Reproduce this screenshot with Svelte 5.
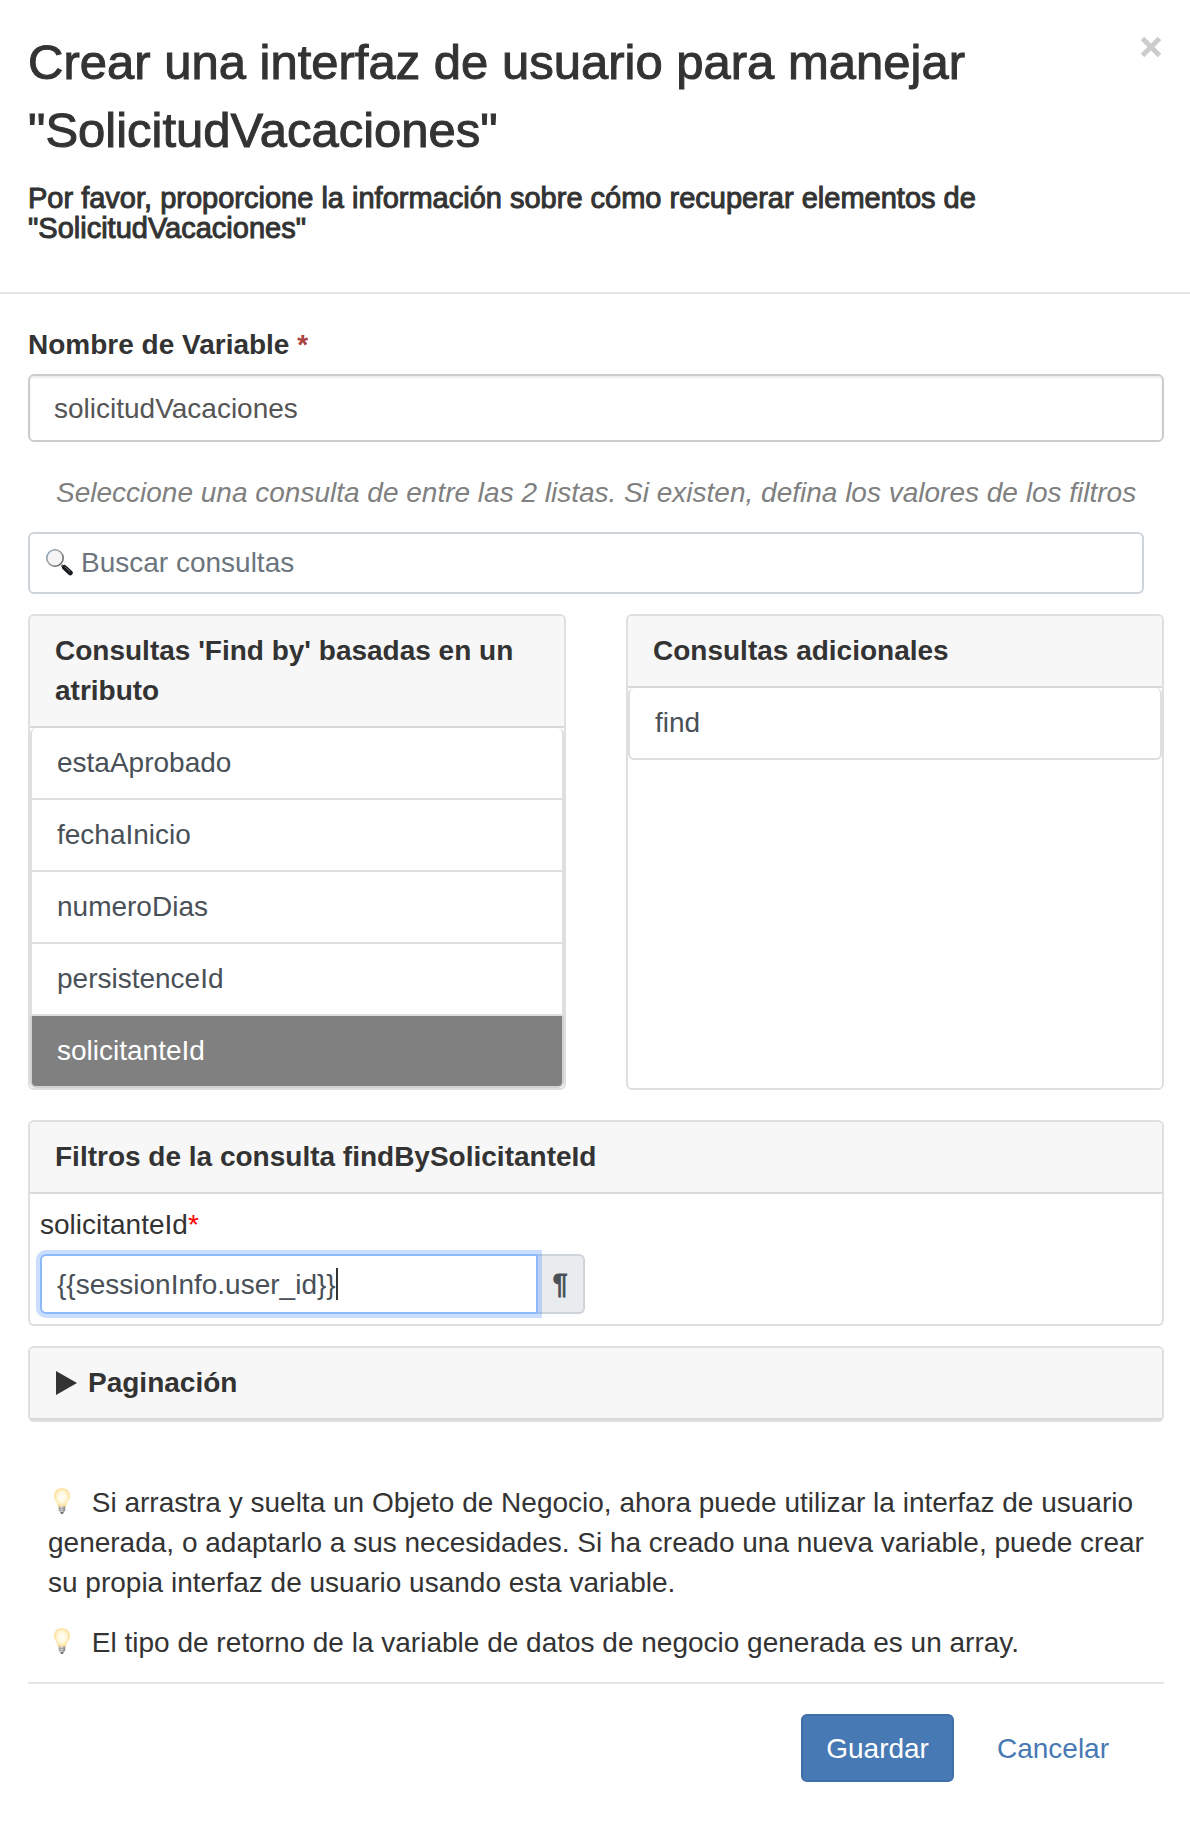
<script>
  const attributeQueries = ['estaAprobado', 'fechaInicio', 'numeroDias', 'persistenceId', 'solicitanteId'];
  const additionalQueries = ['find'];

  let variableName = $state('solicitudVacaciones');
  let search = $state('');
  let selected = $state('solicitanteId');
  let filterValue = $state('{{sessionInfo.user_id}}');
</script>

{#snippet queryCard(title, queries)}
  <section class="card">
    <h2 class="card-header">{title}</h2>
    <ul class="list">
      {#each queries as query}
        <li>
          <button
            type="button"
            class="item"
            class:active={query === selected}
            aria-pressed={query === selected}
            onclick={() => (selected = query)}>{query}</button>
        </li>
      {/each}
    </ul>
  </section>
{/snippet}

{#snippet bulb()}
  <svg class="bulb" viewBox="0 0 36 28" aria-hidden="true">
    <defs>
      <radialGradient id="glass" cx="50%" cy="48%" r="55%">
        <stop offset="0" stop-color="#fffefa" />
        <stop offset="0.5" stop-color="#fff8dc" />
        <stop offset="0.85" stop-color="#fde3a0" />
        <stop offset="1" stop-color="#f3cf80" />
      </radialGradient>
      <linearGradient id="base" x1="0" x2="1" y1="0" y2="0">
        <stop offset="0" stop-color="#8f8f8f" />
        <stop offset="0.4" stop-color="#dedede" />
        <stop offset="1" stop-color="#858585" />
      </linearGradient>
    </defs>
    <path d="M14 1C9.300 1 6 4.600 6 9c0 4 3.500 6.500 4.200 11h7.600C18.500 15.500 22 13 22 9c0-4.400-3.300-8-8-8z" fill="url(#glass)" />
    <path d="M10.800 19.500h6.400v4l-1.400 1.700h-3.600l-1.400-1.700z" fill="url(#base)" />
    <path d="M10.800 21.500h6.400M11 23.500h6" stroke="#8a8a8a" stroke-width="0.6" />
    <path d="M12.200 25.200h3.600l-0.800 1.600h-2z" fill="#484848" />
  </svg>
{/snippet}

<main class="modal">
  <header class="modal-header">
    <div class="headings">
      <h1>Crear una interfaz de usuario para manejar "SolicitudVacaciones"</h1>
      <p class="subtitle">Por favor, proporcione la información sobre cómo recuperar elementos de "SolicitudVacaciones"</p>
    </div>
    <button type="button" class="close" aria-label="Cerrar">
      <svg viewBox="0 0 22 22" aria-hidden="true">
        <path d="M2.500 2.500l17 17M19.500 2.500l-17 17" stroke="currentColor" stroke-width="5" />
      </svg>
    </button>
  </header>

  <form class="modal-body" onsubmit={(e) => e.preventDefault()}>
    <label class="name-label" for="variable-name">Nombre de Variable <span class="required">*</span></label>
    <input id="variable-name" class="name-input" type="text" bind:value={variableName} />

    <p class="hint">Seleccione una consulta de entre las 2 listas. Si existen, defina los valores de los filtros</p>

    <div class="search">
      <svg class="lens" viewBox="0 0 28 28" aria-hidden="true">
        <defs>
          <linearGradient id="rim" x1="0" y1="0" x2="1" y2="1">
            <stop offset="0" stop-color="#8ba6c1" />
            <stop offset="0.5" stop-color="#9a9a9a" />
            <stop offset="1" stop-color="#4c4c4c" />
          </linearGradient>
        </defs>
        <path d="M16.500 16l3 3" stroke="#777" stroke-width="2.500" />
        <path d="M19.500 18.500l5.800 5.300" stroke="#181c20" stroke-width="5" stroke-linecap="round" />
        <path d="M19.800 17.600l5 4.600" stroke="#6a7075" stroke-width="1" stroke-linecap="round" />
        <circle cx="10" cy="9" r="8.200" fill="#f5f5f6" stroke="url(#rim)" stroke-width="1.600" />
      </svg>
      <input type="text" placeholder="Buscar consultas" aria-label="Buscar consultas" bind:value={search} />
    </div>

    <div class="queries">
      {@render queryCard("Consultas 'Find by' basadas en un atributo", attributeQueries)}
      {@render queryCard('Consultas adicionales', additionalQueries)}
    </div>

    <section class="card filters">
      <h2 class="card-header">Filtros de la consulta findBySolicitanteId</h2>
      <div class="filter-body">
        <label for="filter-value">solicitanteId<span class="mandatory">*</span></label>
        <div class="input-group">
          <input id="filter-value" type="text" bind:value={filterValue} />
          <span class="addon">¶</span>
          <span class="caret"></span>
        </div>
      </div>
    </section>

    <section class="card pagination">
      <h2 class="card-header">
        <button type="button" class="toggle" aria-expanded="false">
          <svg viewBox="0 0 22 24" aria-hidden="true"><path d="M1 0l21 12-21 12z" fill="currentColor" /></svg>
          Paginación
        </button>
      </h2>
    </section>

    <div class="tips">
      <p>{@render bulb()} Si arrastra y suelta un Objeto de Negocio, ahora puede utilizar la interfaz de usuario generada, o adaptarlo a sus necesidades. Si ha creado una nueva variable, puede crear su propia interfaz de usuario usando esta variable.</p>
      <p>{@render bulb()} El tipo de retorno de la variable de datos de negocio generada es un array.</p>
    </div>

    <footer class="actions">
      <button type="submit" class="btn primary">Guardar</button>
      <button type="button" class="btn link">Cancelar</button>
    </footer>
  </form>
</main>

<style>
  :global(body) {
    background: #fff;
  }

  .modal,
  .modal * {
    box-sizing: border-box;
  }

  .modal {
    font-family: 'Liberation Sans', Helvetica, Arial, sans-serif;
    font-size: 28px;
    line-height: 40px;
    color: #333;
  }

  h1,
  h2,
  p,
  ul {
    margin: 0;
    padding: 0;
  }

  input,
  button {
    font: inherit;
    color: inherit;
    margin: 0;
  }

  .modal-header {
    display: flex;
    align-items: flex-start;
    gap: 60px;
    padding: 28px 28px 49px;
    border-bottom: 2px solid #e5e5e5;
  }

  .headings {
    flex: 1;
  }

  h1 {
    font-size: 49px;
    line-height: 68px;
    font-weight: 400;
    -webkit-text-stroke: 1px #333;
  }

  .subtitle {
    margin-top: 19px;
    font-size: 29px;
    line-height: 30px;
    -webkit-text-stroke: 1px #333;
  }

  .close {
    display: flex;
    padding: 8px 0;
    border: 0;
    background: none;
    color: #ccc;
    cursor: pointer;
  }

  .close svg {
    width: 22px;
    height: 22px;
  }

  .modal-body {
    display: flex;
    flex-direction: column;
    padding: 31px 26px 50px 28px;
  }

  .name-label {
    font-weight: 700;
  }

  .required {
    color: #a94442;
  }

  .name-input {
    margin-top: 9px;
    padding: 13px 24px 11px;
    border: 2px solid #ccc;
    border-radius: 6px;
    box-shadow: inset 0 2px 2px rgba(0, 0, 0, 0.075);
    color: #555;
    background: #fff;
  }

  .hint {
    margin-top: 31px;
    padding-left: 28px;
    font-style: italic;
    color: #808080;
  }

  .search {
    display: flex;
    align-items: center;
    gap: 8px;
    margin: 19px 20px 0 0;
    padding: 9px 15px;
    border: 2px solid #ced4da;
    border-radius: 6px;
  }

  .lens {
    width: 28px;
    height: 28px;
    flex: none;
  }

  .search input {
    flex: 1;
    min-width: 0;
    padding: 0;
    border: 0;
    outline: 0;
    background: none;
    color: #495057;
  }

  .search input::placeholder {
    color: #6c757d;
    opacity: 1;
  }

  .queries {
    display: grid;
    grid-template-columns: 1fr 1fr;
    gap: 60px;
    margin-top: 20px;
  }

  .card {
    border: 2px solid #dfdfdf;
    border-radius: 6px;
    background: #fff;
  }

  .card-header {
    padding: 15px 25px;
    border-bottom: 2px solid #d9d9d9;
    border-radius: 4px 4px 0 0;
    background: #f7f7f7;
    font-size: 28px;
    font-weight: 700;
  }

  .list {
    list-style: none;
  }

  .item {
    display: block;
    width: 100%;
    padding: 15px 25px;
    border: 2px solid #dfdfdf;
    border-top: 0;
    background: #fff;
    color: #495057;
    text-align: left;
    cursor: pointer;
  }

  li:first-child .item {
    border-top-left-radius: 6px;
    border-top-right-radius: 6px;
  }

  li:last-child .item {
    border-bottom-left-radius: 6px;
    border-bottom-right-radius: 6px;
  }

  .item.active {
    background: #808080;
    border-color: #d2d2d2;
    color: #fff;
  }

  .filters {
    margin-top: 30px;
  }

  .filter-body {
    display: flex;
    flex-direction: column;
    gap: 9px;
    padding: 11px 10px 10px;
  }

  .mandatory {
    color: #f00;
  }

  .input-group {
    position: relative;
    display: flex;
    width: 49%;
  }

  .input-group input {
    position: relative;
    z-index: 1;
    flex: 1;
    min-width: 0;
    padding: 9px 15px 7px;
    border: 2px solid #8bb9fb;
    border-radius: 6px 0 0 6px;
    outline: 0;
    box-shadow: 0 0 0 4px rgba(50, 125, 255, 0.25);
    background: #fff;
    color: #495057;
  }

  .addon {
    padding: 8px 15px;
    border: 2px solid #ced4da;
    border-left: 0;
    border-radius: 0 6px 6px 0;
    background: #e9ecef;
    color: #495057;
    -webkit-text-stroke: 1px #495057;
  }

  /* Text cursor shown at the end of the filter expression */
  .caret {
    position: absolute;
    z-index: 2;
    top: 14px;
    left: 296px;
    width: 2px;
    height: 32px;
    background: #333;
  }

  .input-group:focus-within .caret {
    display: none;
  }

  .pagination {
    margin-top: 20px;
  }

  .toggle {
    display: flex;
    align-items: center;
    gap: 11px;
    padding: 0;
    border: 0;
    background: none;
    cursor: pointer;
  }

  .toggle svg {
    width: 22px;
    height: 24px;
  }

  .tips {
    display: flex;
    flex-direction: column;
    gap: 20px;
    margin-top: 61px;
    padding: 0 10px 19px 20px;
  }

  .bulb {
    width: 36px;
    height: 28px;
    vertical-align: -3px;
  }

  .actions {
    display: flex;
    justify-content: flex-end;
    gap: 18px;
    padding: 30px 30px 0 0;
    border-top: 2px solid #e5e5e5;
  }

  .btn {
    padding: 13px 23px 11px;
    border: 2px solid transparent;
    border-radius: 6px;
    cursor: pointer;
  }

  .primary {
    border-color: #3f6fa8;
    background: #4779b4;
    color: #fff;
  }

  .link {
    background: none;
    color: #4779b4;
  }
</style>
